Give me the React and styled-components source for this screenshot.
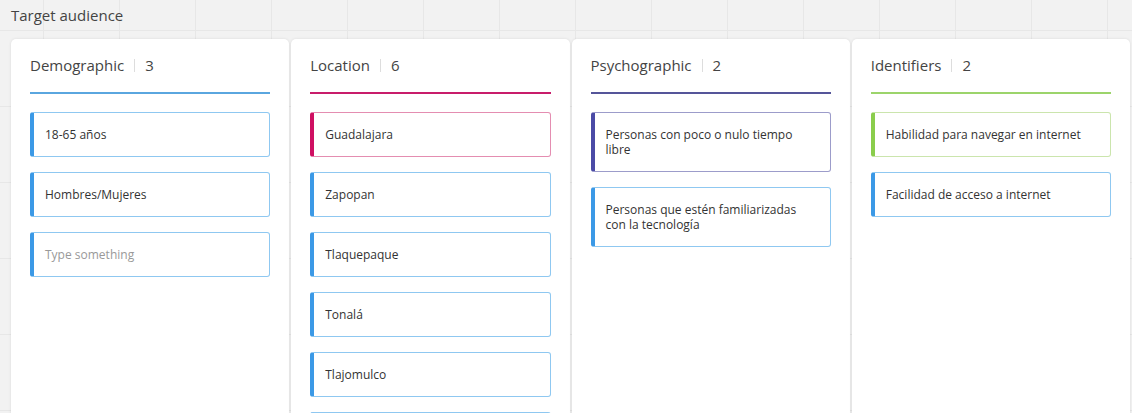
import React from 'react';
import styled, { createGlobalStyle } from 'styled-components';

const palette = {
	blue: { bar: "#3b99e6", border: "#8fc8f1", line: "#5aa6df" },
	pink: { bar: "#cf0f62", border: "#e48db1", line: "#c81d6b" },
	indigo: { bar: "#4b4ba6", border: "#9c9cca", line: "#555599" },
	green: { bar: "#8acd4c", border: "#cbe5ad", line: "#9cd46b" },
};

const columns = [
	{
		title: "Demographic", count: 3, color: "blue",
		items: [
			{ text: "18-65 años" },
			{ text: "Hombres/Mujeres" },
			{ text: "Type something", placeholder: true },
		],
	},
	{
		title: "Location", count: 6, color: "pink",
		items: [
			{ text: "Guadalajara", color: "pink" },
			{ text: "Zapopan" },
			{ text: "Tlaquepaque" },
			{ text: "Tonalá" },
			{ text: "Tlajomulco" },
			{ text: "El Salto" },
		],
	},
	{
		title: "Psychographic", count: 2, color: "indigo",
		items: [
			{ text: "Personas con poco o nulo tiempo libre", color: "indigo" },
			{ text: "Personas que estén familiarizadas con la tecnología" },
		],
	},
	{
		title: "Identifiers", count: 2, color: "green",
		items: [
			{ text: "Habilidad para navegar en internet", color: "green" },
			{ text: "Facilidad de acceso a internet" },
		],
	},
];

export default function App () {
	return (
		<>
			<GlobalStyle />
			<Page>
				<PageTitle>Target audience</PageTitle>
				<Board>
					{ columns.map( ( col ) => (
						<Card key={ col.title }>
							<CardHeader color={ col.color }>
								<CardTitle>{ col.title }</CardTitle>
								<Divider />
								<Count>{ col.count }</Count>
							</CardHeader>
							<ItemList>
								{ col.items.map( ( item ) => (
									<Item key={ item.text } color={ item.color || "blue" } $placeholder={ item.placeholder }>
										{ item.text }
									</Item>
								) ) }
							</ItemList>
						</Card>
					) ) }
				</Board>
			</Page>
		</>
	)
}

const GlobalStyle = createGlobalStyle`
	html, body {
		margin: 0;
		padding: 0;
		height: 100%;
		overflow: hidden;
	}
	body {
		font-family: "Open Sans", "Noto Sans", sans-serif;
		background-color: #f2f2f2;
		background-image:
			linear-gradient(to right, #e7e7e7 1px, transparent 1px),
			linear-gradient(to bottom, #e7e7e7 1px, transparent 1px);
		background-size: 76px 76px;
		background-position: 43px 30px;
	}
`

const Page = styled.div`
	padding: 4px 2px 0 11px;
`

const PageTitle = styled.h1`
	margin: 0;
	font-size: 15px;
	font-weight: normal;
	line-height: 22px;
	color: #444;
	height: 35px;
`

const Board = styled.div`
	display: grid;
	grid-template-columns: repeat(4, 1fr);
	gap: 2px;
	align-items: stretch;
`

const Card = styled.div`
	background: #fff;
	border-radius: 5px;
	box-shadow: 0 0 3px rgba(0, 0, 0, 0.1);
	padding: 16px 19px 20px 19px;
	min-height: 420px;
`

const CardHeader = styled.div`
	display: flex;
	align-items: center;
	height: 20px;
	padding-bottom: 17px;
	border-bottom: 2px solid ${ p => palette[ p.color ].line };
	margin-bottom: 18px;
`

const CardTitle = styled.span`
	font-size: 15px;
	color: #444;
`

const Divider = styled.span`
	width: 1px;
	height: 13px;
	background: #ddd;
	margin: 0 10px;
`

const Count = styled.span`
	font-size: 15px;
	color: #444;
`

const ItemList = styled.div`
	display: flex;
	flex-direction: column;
	gap: 15px;
`

const Item = styled.div`
	border: 1px solid ${ p => palette[ p.color ].border };
	border-left: 4px solid ${ p => palette[ p.color ].bar };
	border-radius: 3px;
	padding: 14px 20px 14px 11px;
	font-size: 12px;
	line-height: 15px;
	color: ${ p => p.$placeholder ? "#999" : "#333" };
	background: #fff;
`
